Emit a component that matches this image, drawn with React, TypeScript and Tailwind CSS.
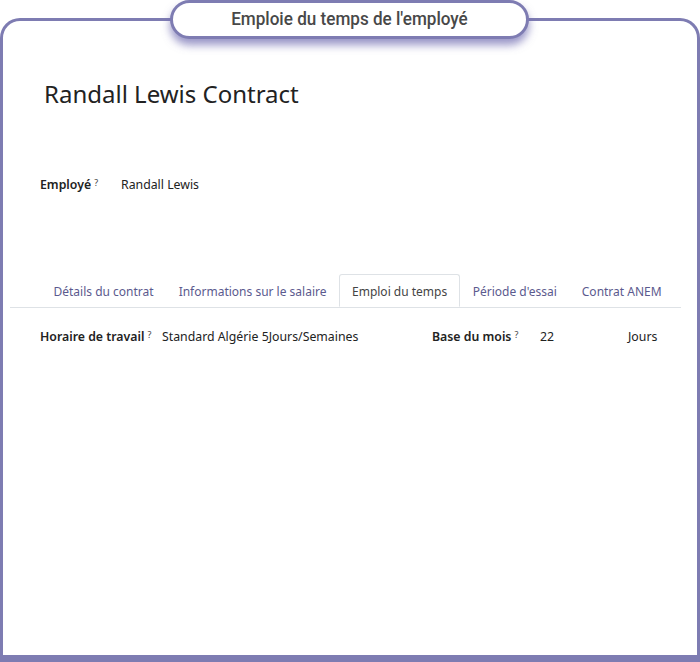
import React from "react";

const Q = () => <sup className="text-[9px] font-normal text-[#444] ml-[3px] relative -top-[3px]">?</sup>;

export default function App() {
  const tabs = ["Détails du contrat", "Informations sur le salaire", "Emploi du temps", "Période d'essai", "Contrat ANEM"];
  return (
    <div className="relative w-[700px] h-[662px] bg-white overflow-hidden" style={{ fontFamily: '"Noto Sans", "Open Sans", sans-serif' }}>
      <div className="absolute left-[170px] top-0 w-[359px] h-[39px] rounded-full border-[3px] border-[#7e7cb2] bg-white z-10 flex items-center justify-center shadow-[0_6px_8px_rgba(110,105,175,0.7)]">
        <span className="inline-block scale-x-[0.9] text-[19px] font-medium text-[#484848] whitespace-nowrap" style={{ fontFamily: '"Roboto", sans-serif' }}>Emploie du temps de l'employé</span>
      </div>
      <div className="mt-[18px] h-[644px] border-[3px] border-b-[7px] border-[#7e7cb2] rounded-t-[20px] bg-white">
        <div className="pt-[58px] pl-[41px] text-[24px] leading-[30px] text-[#222]">Randall Lewis Contract</div>
        <div className="mt-[67px] flex items-center text-[12.3px] leading-[18px] pl-[37px]">
          <div className="w-[81px] font-semibold text-[#222] whitespace-nowrap">Employé<Q /></div>
          <div className="text-[#222]">Randall Lewis</div>
        </div>
        <div className="mt-[80px] mx-[7px] mr-[16px] flex border-b border-[#dee2e6] text-[12px] pl-[31px]">
          {tabs.map((t, i) =>
            i === 2 ? (
              <div key={t} className="h-[33px] pt-[2px] px-[12px] flex items-center whitespace-nowrap border border-[#dee2e6] border-b-white -mb-px rounded-t-[3px] bg-white text-[#444]">{t}</div>
            ) : (
              <div key={t} className="h-[33px] pt-[2px] px-[12.5px] flex items-center whitespace-nowrap text-[#5b5a8e]">{t}</div>
            )
          )}
        </div>
        <div className="mt-[20px] flex items-center text-[12.3px] leading-[18px] pl-[37px] text-[#222] whitespace-nowrap">
          <div className="w-[122px] font-semibold">Horaire de travail<Q /></div>
          <div className="w-[270px]">Standard Algérie 5Jours/Semaines</div>
          <div className="w-[108px] font-semibold">Base du mois<Q /></div>
          <div className="w-[88px]">22</div>
          <div>Jours</div>
        </div>
      </div>
    </div>
  );
}
